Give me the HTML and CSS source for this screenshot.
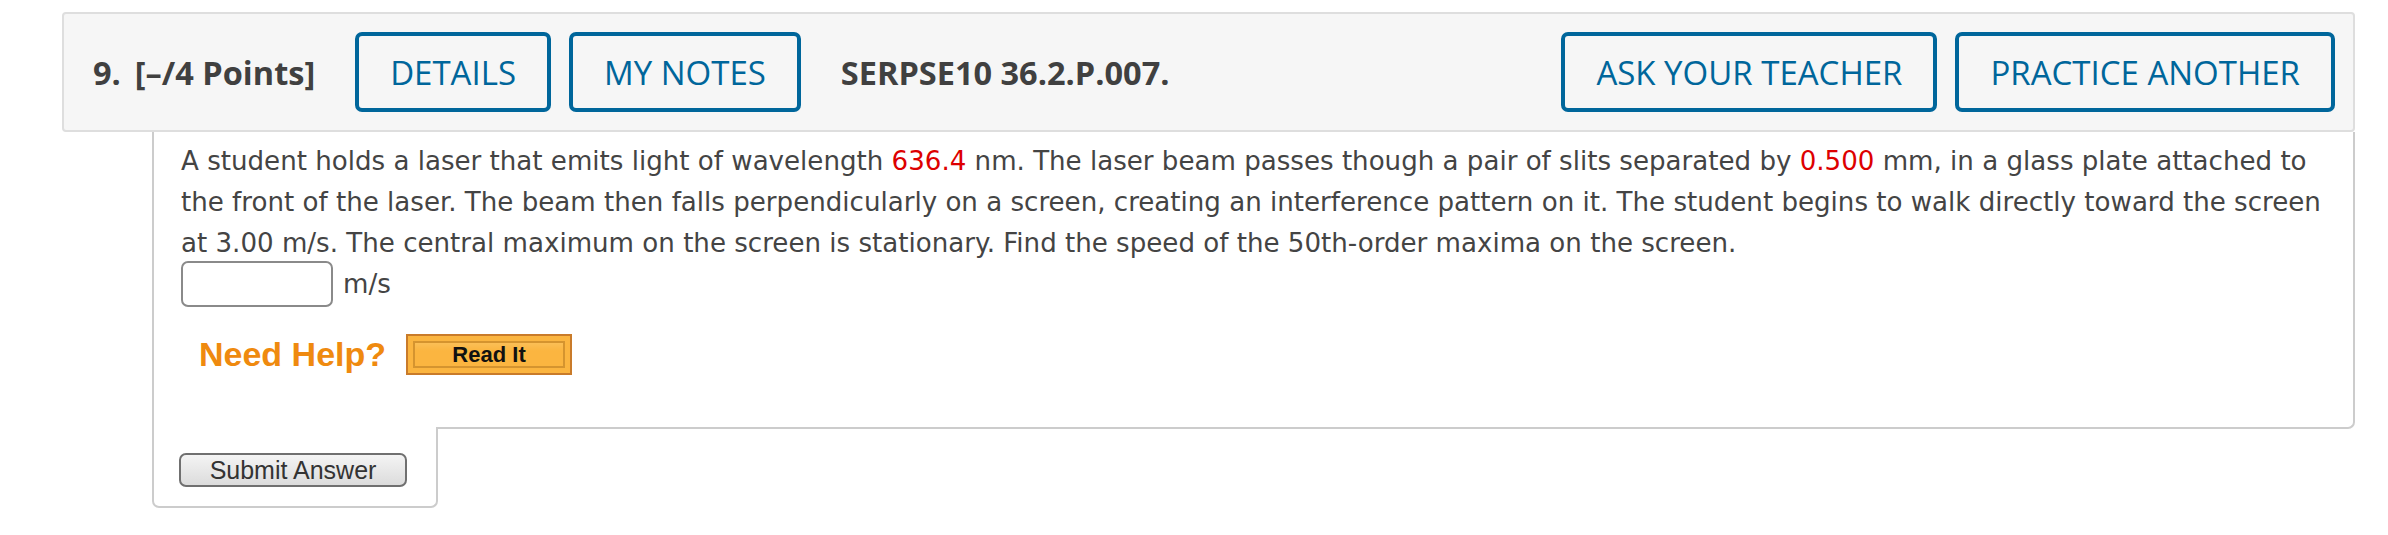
FILE: index.html
```html
<!DOCTYPE html>
<html lang="en">
<head>
    <meta charset="UTF-8">
    <title>Question 9</title>
    <link rel="stylesheet" href="styles.css">
</head>
<body>
    <div class="page">
        <div class="q-header">
            <span class="q-num">9.</span>
            <span class="q-points">[&ndash;/4 Points]</span>
            <button class="hdr-btn">DETAILS</button>
            <button class="hdr-btn">MY NOTES</button>
            <span class="q-ref">SERPSE10 36.2.P.007.</span>
            <span class="spacer"></span>
            <button class="hdr-btn">ASK YOUR TEACHER</button>
            <button class="hdr-btn">PRACTICE ANOTHER</button>
        </div>

        <div class="q-body">
            <p class="q-text">A student holds a laser that emits light of wavelength <span class="val">636.4</span> nm. The laser beam passes though a pair of slits separated by <span class="val">0.500</span> mm, in a glass plate attached to the front of the laser. The beam then falls perpendicularly on a screen, creating an interference pattern on it. The student begins to walk directly toward the screen at 3.00 m/s. The central maximum on the screen is stationary. Find the speed of the 50th-order maxima on the screen.</p>
            <div class="answer">
                <input type="text" class="ans-input">
                <span class="unit">m/s</span>
            </div>
            <div class="help">
                <span class="need-help">Need Help?</span>
                <button class="read-it">Read It</button>
            </div>
        </div>

        <div class="submit-box">
            <button class="submit-btn">Submit Answer</button>
        </div>
    </div>
</body>
</html>
```

FILE: styles.css
```css
body {
    margin: 0;
    background: #fff;
}
.page {
    padding: 12px 33px 0 62px;
}
.q-header {
    display: flex;
    align-items: center;
    background-color: #f6f6f6;
    border: 2px solid #dedede;
    border-radius: 4px;
    padding: 18px 18px 18px 29px;
    font-family: "Open Sans", sans-serif;
    color: #404040;
}
.q-num {
    font-weight: 700;
    font-size: 32.5px;
}
.q-points {
    font-weight: 700;
    font-size: 32.5px;
    margin-left: 14px;
    margin-right: 40px;
}
.q-ref {
    font-weight: 700;
    font-size: 32.5px;
    margin-left: 22px;
}
.spacer {
    flex: 1;
}
.hdr-btn {
    font-family: "Open Sans", sans-serif;
    font-size: 33px;
    color: #00669b;
    background: transparent;
    border: 4px solid #00669b;
    border-radius: 7px;
    height: 80px;
    padding: 0 31px;
    margin-right: 18px;
}
.hdr-btn:last-child {
    margin-right: 0;
}
.q-body {
    margin-left: 90px;
    border: 2px solid #cccccc;
    border-top: none;
    border-radius: 0 0 7px 0;
    padding: 9px 12px 52px 27px;
    font-family: "DejaVu Sans", Verdana, sans-serif;
    font-size: 26.1px;
    color: #444444;
}
.q-text {
    margin: 0;
    line-height: 41px;
}
.val {
    color: #dd0000;
}
.answer {
    display: flex;
    align-items: center;
    gap: 10px;
    margin-top: -3px;
}
.ans-input {
    width: 152px;
    height: 46px;
    box-sizing: border-box;
    border: 2px solid #8a8a8a;
    border-radius: 7px;
    background: #fff;
    margin: 0;
}
.help {
    display: flex;
    align-items: center;
    margin-top: 27px;
    margin-left: 18px;
}
.need-help {
    font-family: "Liberation Sans", Arial, sans-serif;
    font-weight: 700;
    font-size: 34px;
    color: #ef8a0f;
    margin-right: 20px;
}
.read-it {
    width: 166px;
    height: 41px;
    font-family: "Liberation Sans", Arial, sans-serif;
    font-weight: 700;
    font-size: 22px;
    color: #111;
    background: linear-gradient(#fbc86a, #fbb540 40%, #fbb540);
    border: 2px solid #c97b2a;
    box-shadow: inset 0 0 0 5px #fbb540, inset 0 0 0 7px #d5942f;
    padding: 0;
}
.submit-box {
    width: 286px;
    box-sizing: border-box;
    margin-left: 90px;
    margin-top: -2px;
    background: #fff;
    border: 2px solid #cccccc;
    border-top: none;
    border-radius: 0 0 7px 7px;
    padding: 26px 0 19px 25px;
    position: relative;
}
.submit-btn {
    width: 228px;
    height: 34px;
    font-family: "Liberation Sans", Arial, sans-serif;
    font-size: 25px;
    color: #333;
    background: linear-gradient(#f4f4f4, #dcdcdc);
    border: 2px solid #707070;
    border-radius: 7px;
    padding: 0;
    line-height: 30px;
}
```
